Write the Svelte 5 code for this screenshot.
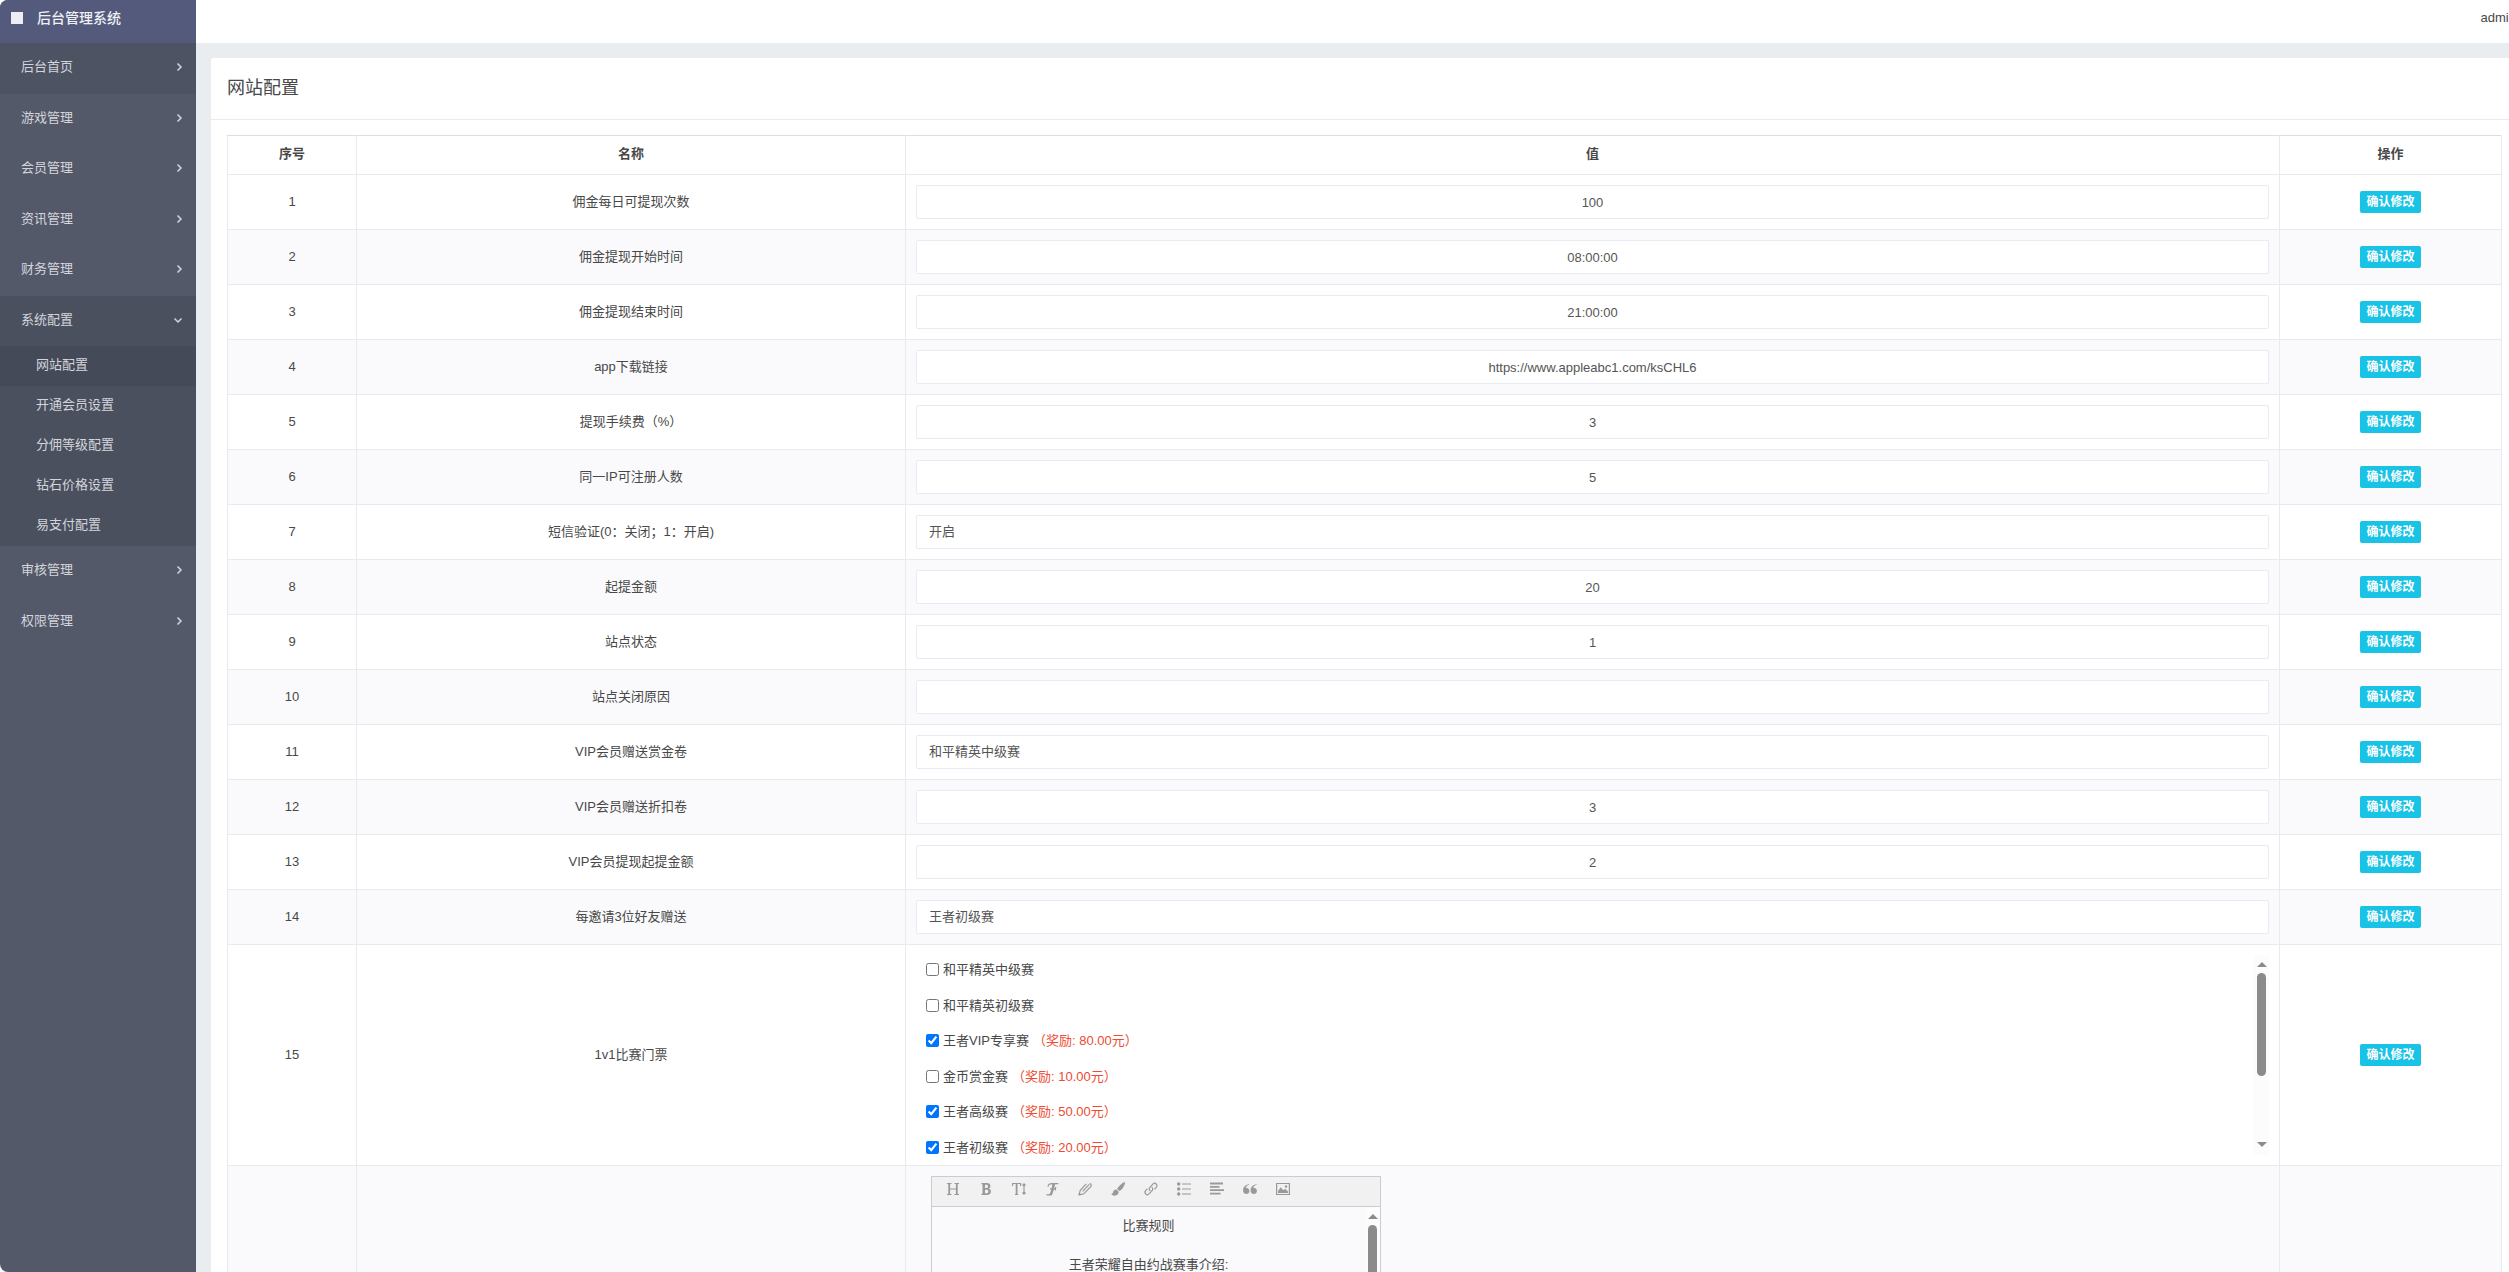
<script lang="ts">
  type Row = { name: string; value: string; select?: boolean };

  const rows: Row[] = [
    { name: '佣金每日可提现次数', value: '100' },
    { name: '佣金提现开始时间', value: '08:00:00' },
    { name: '佣金提现结束时间', value: '21:00:00' },
    { name: 'app下载链接', value: 'https://www.appleabc1.com/ksCHL6' },
    { name: '提现手续费（%）', value: '3' },
    { name: '同一IP可注册人数', value: '5' },
    { name: '短信验证(0：关闭；1：开启)', value: '开启', select: true },
    { name: '起提金额', value: '20' },
    { name: '站点状态', value: '1' },
    { name: '站点关闭原因', value: '' },
    { name: 'VIP会员赠送赏金卷', value: '和平精英中级赛', select: true },
    { name: 'VIP会员赠送折扣卷', value: '3' },
    { name: 'VIP会员提现起提金额', value: '2' },
    { name: '每邀请3位好友赠送', value: '王者初级赛', select: true },
  ];

  const tickets = [
    { name: '和平精英中级赛', reward: '', checked: false },
    { name: '和平精英初级赛', reward: '', checked: false },
    { name: '王者VIP专享赛', reward: '（奖励: 80.00元）', checked: true },
    { name: '金币赏金赛', reward: '（奖励: 10.00元）', checked: false },
    { name: '王者高级赛', reward: '（奖励: 50.00元）', checked: true },
    { name: '王者初级赛', reward: '（奖励: 20.00元）', checked: true },
  ];

  const menu = [
    { name: '后台首页', hover: true },
    { name: '游戏管理' },
    { name: '会员管理' },
    { name: '资讯管理' },
    { name: '财务管理' },
    { name: '系统配置', children: ['网站配置', '开通会员设置', '分佣等级配置', '钻石价格设置', '易支付配置'] },
    { name: '审核管理' },
    { name: '权限管理' },
  ];

  const tools = ['标题', '粗体', '字号', '字体', '文字颜色', '背景色', '链接', '列表', '对齐', '引用', '图片'];
</script>

<div class="app">
  <aside>
    <a class="brand" href="#home"><span class="mark"></span>后台管理系统</a>
    <nav>
      <ul class="menu">
        {#each menu as item}
          <li class:open={item.children}>
            <a class="link" class:hover={item.hover} href="#menu">
              <span>{item.name}</span>
              <svg class="chev" viewBox="0 0 10 10" width="10" height="10">
                {#if item.children}
                  <path d="M1.500 3.500 5 7l3.500-3.500" />
                {:else}
                  <path d="M4.500 1.500 8 5 4.500 8.500" />
                {/if}
              </svg>
            </a>
            {#if item.children}
              <ul class="sub">
                {#each item.children as child, i}
                  <li><a class:current={i === 0} href="#sub">{child}</a></li>
                {/each}
              </ul>
            {/if}
          </li>
        {/each}
      </ul>
    </nav>
  </aside>

  <div class="main">
    <header><a href="#account">admin</a></header>
    <main>
      <section class="card">
        <h1>网站配置</h1>
        <div class="body">
          <table>
            <colgroup><col class="c1" /><col class="c2" /><col /><col class="c4" /></colgroup>
            <thead>
              <tr><th>序号</th><th>名称</th><th>值</th><th>操作</th></tr>
            </thead>
            <tbody>
              {#each rows as row, i}
                <tr>
                  <td>{i + 1}</td>
                  <td><label for="field-{i}">{row.name}</label></td>
                  <td>
                    {#if row.select}
                      <select id="field-{i}"><option>{row.value}</option></select>
                    {:else}
                      <input class="text" type="text" id="field-{i}" value={row.value} />
                    {/if}
                  </td>
                  <td><button class="save">确认修改</button></td>
                </tr>
              {/each}
              <tr>
                <td>15</td>
                <td>1v1比赛门票</td>
                <td>
                  <div class="scroller">
                    <ul class="tickets">
                      {#each tickets as t}
                        <li>
                          <label>
                            <input type="checkbox" checked={t.checked} />
                            <span>{t.name}</span>
                            {#if t.reward}<span class="reward">{t.reward}</span>{/if}
                          </label>
                        </li>
                      {/each}
                    </ul>
                    <div class="bar">
                      <i class="up"></i><i class="thumb"></i><i class="down"></i>
                    </div>
                  </div>
                </td>
                <td><button class="save">确认修改</button></td>
              </tr>
              <tr>
                <td></td>
                <td></td>
                <td>
                  <div class="editor">
                    <div class="toolbar">
                      {#each tools as tool, i}
                        <button aria-label={tool}>
                          <svg viewBox="0 0 14 14" width="14" height="14">
                            {#if i === 0}
                              <path d="M1 1.500h4.500M8.500 1.500H13M1 12.500h4.500M8.500 12.500H13M3.200 7h7.600" class="s" /><path d="M3.200 1.500v11M10.800 1.500v11" class="s thick" />
                            {:else if i === 1}
                              <path fill-rule="evenodd" d="M2.500 1h5.300c2.300 0 3.600 1.100 3.600 3 0 1.300-.7 2.200-1.800 2.600 1.500.4 2.300 1.400 2.300 3 0 2.200-1.500 3.400-4 3.400H2.500v-1l1-.4V2.400l-1-.4zM6 2.700V6h1.500c1 0 1.500-.6 1.500-1.700S8.500 2.700 7.500 2.700zM6 7.700v3.600h1.600c1.200 0 1.800-.6 1.800-1.800s-.6-1.800-1.800-1.800z" />
                            {:else if i === 2}
                              <path d="M.6 4V1.500h8V4M3 12.500h3.200M12 2v10M10.500 3.500 12 1.800l1.500 1.700M10.500 10.500 12 12.200l1.500-1.700" class="s" /><path d="M4.600 1.500v11" class="s thick" />
                            {:else if i === 3}
                              <path d="M3 4.600C3.300 2.500 4.800 1.700 7 1.700h6.300M5 6.900h5.600M10.800 5.200l-.6 3.200M1.500 12.800h5.200" class="s" /><path d="M7.300 2h2.900C9.300 6 8.200 10 7 13H4C6 10.500 6.900 6 7.300 2z" />
                            {:else if i === 4}
                              <path d="M.8 13.200 2.300 8.300 8.300 1.900M.8 13.200l4.900-1.400L12.800 4.600c1-1.300.3-2.700-1-3.200M4.600 9.400 11.300 2.400" class="s" /><path d="M.8 13.200 1.500 10.800 3.200 12.500z" />
                            {:else if i === 5}
                              <path d="M13.800.2c.5.8-.2 3-1.700 5.300C11 7.200 9.700 8.400 8.400 9L6.100 6.900C7 5.300 9 3 11 1.500 12.300.5 13.400-.1 13.800.2zM5.400 7.600l2.300 2.200c.1 2.200-1.600 3.800-4 3.900C2 13.700.8 13 .2 11.800c1.500.2 1.600-.8 2-2C2.700 8.300 3.900 7.500 5.400 7.600z" />
                            {:else if i === 6}
                              <path d="M6.300 8.900C5 7.800 5 6.400 5.900 5.400l3-3.300a2.300 2.300 0 0 1 3.400 3.200L10.500 7.300M7.700 5.100C9 6.200 9 7.600 8.100 8.600l-3 3.300a2.300 2.300 0 0 1-3.400-3.200L3.500 6.700" class="s" />
                            {:else if i === 7}
                              <circle cx="1.700" cy="2" r="1.700" /><circle cx="1.700" cy="7" r="1.700" /><circle cx="1.700" cy="12" r="1.700" /><path d="M5 2h9M5 7h9M5 12h9" class="s" />
                            {:else if i === 8}
                              <path d="M0 1.500h13M0 4.800h9.500M0 8.200h14M0 11.600h10.500" class="s thick" />
                            {:else if i === 9}
                              <path d="M6.200 2.800C4.200 3.300 3 4.400 2.700 5.800 4.800 5.500 6.400 7 6.400 8.900c0 1.800-1.400 3.100-3.100 3.100C1.300 12 .1 10.600.1 8.300.1 5 2.300 2.700 6.200 2.200zM13.700 2.800c-2 .5-3.200 1.600-3.500 3 2.100-.3 3.700 1.200 3.700 3.100 0 1.800-1.400 3.100-3.100 3.100-2 0-3.200-1.400-3.200-3.700 0-3.300 2.200-5.600 6.100-6.100z" />
                            {:else}
                              <path d="M.6 1.500h12.800v11H.6z" class="s" /><path d="M2 11V9l2.800-3.800 2.400 3 1.800-1.500L12 9.500V11z" /><circle cx="10" cy="4.500" r="1.200" />
                            {/if}
                          </svg>
                        </button>
                      {/each}
                    </div>
                    <div class="pane">
                      <div class="copy">
                        <p>比赛规则</p>
                        <p>王者荣耀自由约战赛事介绍:</p>
                      </div>
                      <div class="bar"><i class="up"></i><i class="thumb"></i></div>
                    </div>
                  </div>
                </td>
                <td></td>
              </tr>
            </tbody>
          </table>
        </div>
      </section>
    </main>
  </div>
</div>

<style>
  :global(body) {
    background: #fff;
    overflow: hidden;
  }
  .app {
    display: flex;
    height: 100vh;
    overflow: hidden;
    border-radius: 8px 0 0 8px;
    font: 13px/20px 'Liberation Sans', 'Noto Sans CJK SC', sans-serif;
    color: #484848;
  }
  .app * {
    box-sizing: border-box;
  }
  a {
    color: inherit;
    text-decoration: none;
  }
  ul {
    list-style: none;
    margin: 0;
    padding: 0;
  }
  button,
  input,
  select {
    font: inherit;
    color: inherit;
  }

  aside {
    flex: none;
    width: 196px;
    background: #54596a;
    color: #d3d5db;
  }
  .brand {
    display: flex;
    align-items: center;
    gap: 14px;
    height: 43px;
    padding: 0 11px 8px;
    background: #545a7b;
    color: #eef0f4;
    font-size: 14px;
    font-weight: 500;
  }
  .mark {
    width: 12px;
    height: 12px;
    background: #eceef2;
  }
  .link {
    display: flex;
    align-items: center;
    justify-content: space-between;
    height: 51px;
    padding: 0 13px 3px 21px;
  }
  .menu > li:nth-child(even) > .link {
    height: 50px;
  }
  .hover {
    background: #4d5362;
  }
  .open {
    background: #4b505f;
  }
  .chev {
    fill: none;
    stroke: #d3d5db;
    stroke-width: 1.5;
  }
  .sub a {
    display: block;
    padding: 9px 36px 11px;
  }
  .sub .current {
    background: #454a59;
  }

  .main {
    flex: 1;
    min-width: 0;
    background: #e9edf0;
  }
  header {
    display: flex;
    height: 43px;
    padding-top: 8px;
    background: #fff;
    white-space: nowrap;
  }
  header a {
    margin-left: auto;
    margin-right: -7px;
  }
  main {
    padding: 15px 0 0 15px;
  }
  .card {
    margin-right: -9px;
    border-radius: 2px;
    background: #fff;
  }
  h1 {
    margin: 0;
    padding: 18px 16px 19px;
    border-bottom: 1px solid #e9ebee;
    font-size: 18px;
    font-weight: 400;
    line-height: 24px;
  }
  .body {
    padding: 15px 16px;
  }
  table {
    width: 100%;
    table-layout: fixed;
    border-collapse: collapse;
    text-align: center;
  }
  .c1 {
    width: 129px;
  }
  .c2 {
    width: 549px;
  }
  .c4 {
    width: 222px;
  }
  th,
  td {
    padding: 10px;
    border: 1px solid #e7ebf0;
  }
  th {
    height: 39px;
    padding: 8px 10px 10px;
    border-top-color: #dcdee1;
    font-weight: 700;
  }
  tbody tr:nth-child(even) {
    background: #fafafc;
  }
  .text,
  select {
    display: block;
    width: 100%;
    height: 34px;
    padding: 0 12px;
    border: 1px solid #e7ebf3;
    border-radius: 2px;
    background: #fff;
    color: #555;
    appearance: none;
  }
  .text {
    text-align: center;
  }
  .save {
    display: block;
    margin: 0 auto;
    height: 22px;
    padding: 0 6px 1px;
    border: 0;
    border-radius: 2px;
    background: #18c3e6;
    color: #fff;
    font-size: 12px;
    font-weight: 700;
    line-height: 20px;
  }

  .scroller {
    display: flex;
    height: 200px;
    overflow: hidden;
    text-align: left;
  }
  .tickets {
    flex: 1;
    padding: 8px 10px 0;
    line-height: 14px;
  }
  .tickets li {
    height: 36px;
  }
  .tickets li:nth-child(even) {
    height: 35px;
  }
  .tickets li:last-child {
    height: 14px;
  }
  .tickets label {
    display: flex;
    gap: 4px;
  }
  .tickets input {
    width: 13px;
    height: 13px;
    margin: 0;
  }
  .reward {
    color: #ee4b32;
  }
  .bar {
    flex: none;
    display: flex;
    flex-direction: column;
    align-items: center;
    width: 15px;
    background: #fcfcfc;
  }
  .up {
    margin: 7px 0 6px;
    border: solid transparent;
    border-width: 0 5px 5px;
    border-bottom-color: #8b8b8b;
  }
  .thumb {
    width: 9px;
    height: 103px;
    border-radius: 5px;
    background: #8b8b8b;
  }
  .down {
    margin: auto 0 8px;
    border: solid transparent;
    border-width: 5px 5px 0;
    border-top-color: #8b8b8b;
  }

  .editor {
    width: 450px;
    margin-left: 15px;
    border: 1px solid #ccc;
  }
  .toolbar {
    display: flex;
    height: 30px;
    padding: 0 4px 5px;
    border-bottom: 1px solid #ccc;
    background: #f1f1f1;
  }
  .toolbar button {
    display: grid;
    place-items: center;
    width: 33px;
    padding: 0;
    border: 0;
    background: none;
  }
  .toolbar svg {
    fill: #999;
    overflow: visible;
  }
  .s {
    fill: none;
    stroke: #999;
    stroke-width: 1.2;
  }
  .thick {
    stroke-width: 1.8;
  }
  .pane {
    display: flex;
    height: 300px;
  }
  .copy {
    flex: 1;
    padding-top: 9px;
  }
  .copy p {
    margin: 0 0 19px;
  }
</style>
